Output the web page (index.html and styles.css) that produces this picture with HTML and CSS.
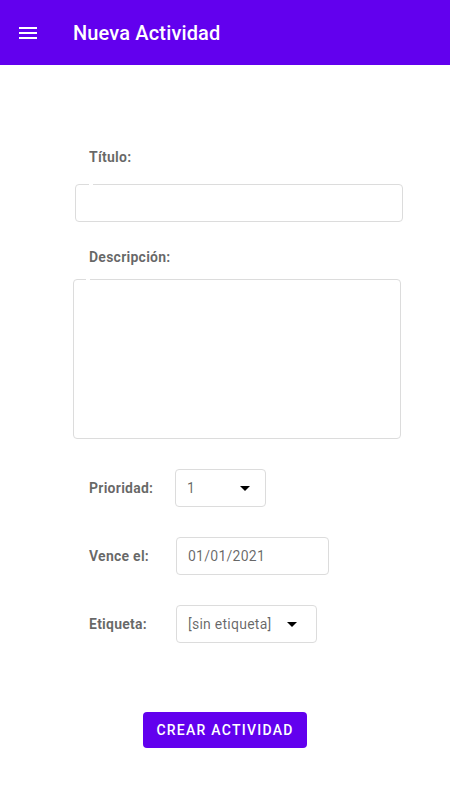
FILE: index.html
```html
<!DOCTYPE html>
<html lang="es">
<head>
<meta charset="utf-8">
<title>Nueva Actividad</title>
<link rel="stylesheet" href="styles.css">
</head>
<body>
<header class="app-bar">
  <svg class="menu-icon" width="24" height="24" viewBox="0 0 24 24" aria-hidden="true"><path fill="#fff" d="M3 18h18v-2H3v2zm0-5h18v-2H3v2zm0-7v2h18V6H3z"/></svg>
  <h1 class="app-title">Nueva Actividad</h1>
</header>
<main class="form">
  <label class="field-label first">Título:</label>
  <div class="outlined title-box"><input class="text-input" type="text"></div>

  <label class="field-label desc-label">Descripción:</label>
  <div class="outlined desc-box"><textarea class="text-area"></textarea></div>

  <div class="row row-first">
    <span class="row-label">Prioridad:</span>
    <div class="outlined select prio-select">
      <span class="value">1</span>
      <svg class="arrow" width="24" height="24" viewBox="0 0 24 24"><path fill="#000" d="M7 10l5 5 5-5z"/></svg>
    </div>
  </div>

  <div class="row">
    <span class="row-label">Vence el:</span>
    <div class="outlined date-box"><span class="value">01/01/2021</span></div>
  </div>

  <div class="row">
    <span class="row-label">Etiqueta:</span>
    <div class="outlined select tag-select">
      <span class="value">[sin etiqueta]</span>
      <svg class="arrow" width="24" height="24" viewBox="0 0 24 24"><path fill="#000" d="M7 10l5 5 5-5z"/></svg>
    </div>
  </div>

  <div class="actions">
    <button class="primary-btn" type="button">CREAR ACTIVIDAD</button>
  </div>
</main>
</body>
</html>
```
FILE: styles.css
```css
* { box-sizing: border-box; }
html, body { margin: 0; padding: 0; background: #fff; }
body { font-family: Roboto, "Noto Sans", sans-serif; color: rgba(0,0,0,0.87); }

.app-bar {
  height: 65px;
  background: #6200ee;
  display: flex;
  align-items: center;
  padding-left: 16px;
}
.menu-icon { display: block; flex: none; }
.app-title {
  margin: 0 0 0 33px;
  font-size: 20px;
  font-weight: 500;
  color: #fff;
  letter-spacing: 0.15px;
}

.form { padding-top: 82px; display: flex; flex-direction: column; align-items: flex-start; }

.field-label, .row-label {
  font-size: 14px;
  font-weight: 700;
  line-height: 20px;
  letter-spacing: 0.25px;
  color: rgba(0,0,0,0.6);
}
.field-label { margin-left: 89px; }
.desc-label { margin-top: 25px; }

.outlined {
  position: relative;
  border: 1px solid #dcdcdc;
  border-radius: 4px;
  background: #fff;
}
.outlined.title-box::before,
.outlined.desc-box::before {
  content: "";
  position: absolute;
  top: -1px;
  width: 4px;
  height: 1px;
  background: #fff;
}
.title-box::before { left: 13px; }
.desc-box::before { left: 12px; }

.title-box { margin-top: 17px; margin-left: 75px; width: 328px; height: 38px; }
.desc-box { margin-top: 12px; margin-left: 73px; width: 328px; height: 160px; }

.text-input, .text-area {
  width: 100%;
  height: 100%;
  border: 0;
  outline: 0;
  background: transparent;
  font: inherit;
  resize: none;
  padding: 0 12px;
}

.row {
  display: flex;
  align-items: center;
  margin-top: 30px;
  padding-left: 89px;
  height: 38px;
}
.row-label { width: 86px; flex: none; }

.select, .date-box {
  height: 38px;
  display: flex;
  align-items: center;
  padding-left: 11px;
}
.value { font-size: 14px; color: rgba(0,0,0,0.6); letter-spacing: 0.25px; }
.select { justify-content: space-between; }
.arrow { display: block; flex: none; }
.prio-select { width: 91px; padding-right: 8px; }
.date-box { width: 153px; margin-left: 1px; }
.tag-select { width: 141px; margin-left: 1px; padding-right: 12px; }

.actions { align-self: stretch; display: flex; justify-content: center; margin-top: 69px; }
.primary-btn {
  width: 164px;
  height: 36px;
  border: 0;
  border-radius: 4px;
  background: #6200ee;
  color: #fff;
  font-family: Roboto, sans-serif;
  font-size: 14px;
  font-weight: 500;
  letter-spacing: 1.25px;
  padding: 0;
}
```
